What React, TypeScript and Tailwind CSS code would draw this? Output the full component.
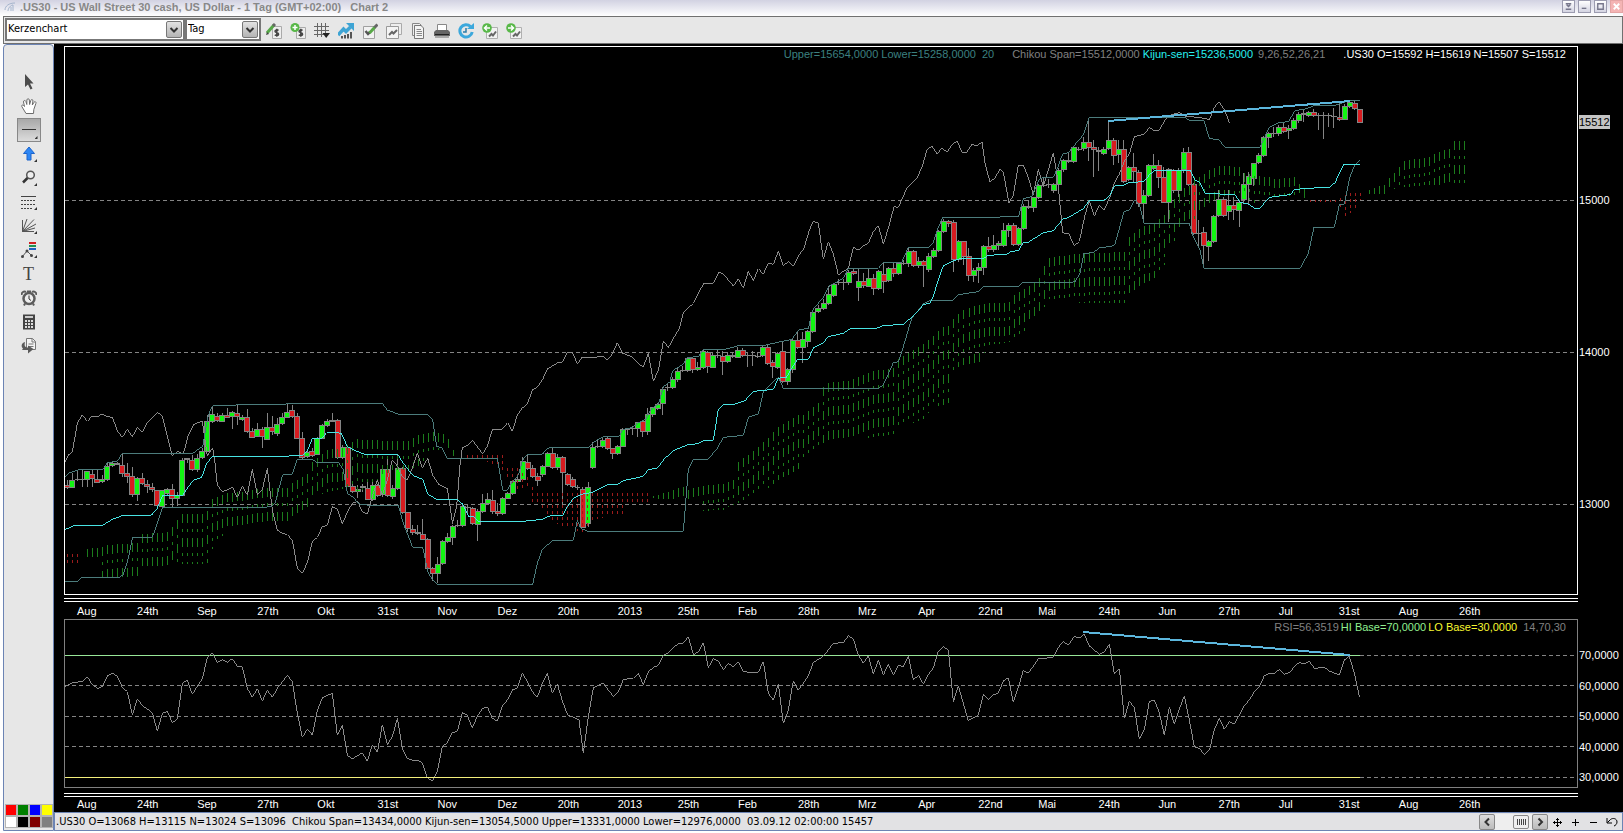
import type { ReactNode } from 'react'

const AXIS_LABELS = [
    'Aug', '24th', 'Sep', '27th', 'Okt', '31st', 'Nov', 'Dez', '20th', '2013', '25th', 'Feb',
    '28th', 'Mrz', 'Apr', '22nd', 'Mai', '24th', 'Jun', '27th', 'Jul', '31st', 'Aug', '26th',
]

const SWATCHES = ['bg-[#ff0000]', 'bg-[#008000]', 'bg-[#0000ff]', 'bg-[#ffff00]', 'bg-white', 'bg-black', 'bg-[#800000]', 'bg-[#808080]']

// Every section of the series is drawn from its own origin, three units per pixel
interface Section {
    x: number
    y: number
    upper: string
    lower: string
    kijun: string
    chikou: string
    candles: string
}

const SECTIONS: Section[] = [
    {
        x: 60,
        y: 380,
        upper: '14,292 27,279 60,268 130,268 142,248 172,244 187,220 398,220 415,208 428,200 440,130 445,105 458,77 525,76 532,73 675,73 682,70 967,70 982,90 1000,96 1012,102 1104,104 1118,120 1130,200 1145,202 1162,235 1200,235',
        lower: '14,603 52,604 67,592 178,592 190,584 205,535 217,474 277,472 292,430 308,382 632,381 645,370 668,285 697,283 712,238 757,238 770,247 835,247 850,270 862,340 880,352 895,370 905,374 935,376 1015,376 1030,430 1058,502 1088,502 1105,580 1120,602 1133,613 1200,613',
        kijun: '14,449 40,438 128,436 157,418 187,407 275,405 290,388 308,346 368,346 398,302 425,292 440,250 458,229 675,229 730,225 742,212 757,176 785,175 800,158 832,157 845,162 862,200 908,222 1013,223 1030,250 1058,286 1088,298 1103,342 1130,358 1190,358',
        chikou: '14,248 25,225 37,215 52,130 67,104 82,124 97,108 112,110 127,102 142,110 157,112 172,152 187,172 202,148 217,170 232,142 247,156 262,128 293,98 307,108 337,228 352,214 370,222 385,165 400,135 427,122 435,180 442,228 450,215 458,203 465,250 472,315 487,335 502,330 517,321 532,352 547,318 562,345 577,268 592,345 607,328 622,265 637,390 652,450 667,460 682,464 697,480 712,565 727,580 742,548 757,485 772,472 787,440 802,436 817,380 832,388 847,432 862,396 877,370 893,364 907,395 922,402 937,350 952,300 967,345 982,300 997,240 1012,258 1027,290 1042,300 1057,265 1072,220 1087,265 1103,235 1118,285 1135,312 1148,320 1162,325 1178,432',
        candles: 'r22,317,322,300,328 g37,301,322,278,325 d52,299,301,270,302 d67,298,300,268,322 g82,275,298,272,322 r97,284,297,270,322 r112,299,307,270,308 g127,299,306,285,308 g142,260,299,245,302 g157,250,258,246,262 r172,251,254,246,256 r187,256,280,222,290 r202,281,289,250,308 r217,290,343,262,350 g232,295,343,290,362 r247,295,312,280,315 r262,314,320,300,340 r277,322,330,308,335 r292,332,378,330,380 g307,332,380,330,382 g322,329,340,325,345 r337,329,357,312,385 g352,347,356,335,378 g367,241,347,235,348 g382,237,240,235,250 r397,241,268,225,272 g412,236,268,222,275 g427,215,234,205,236 g442,126,214,105,216 g457,103,125,78,128 r472,109,123,100,125 g487,107,124,98,126 r502,108,112,85,115 g517,99,109,92,148 r532,100,110,75,135 g547,113,119,105,122 r562,113,154,88,160 r577,154,172,145,175 g592,150,170,130,172 r607,150,171,142,205 g622,143,178,98,180 r637,144,155,108,165 g652,133,160,115,168 g667,113,132,100,135 g682,97,112,70,115 r697,92,110,75,115 r712,109,175,100,178 r727,176,232,155,236 g742,217,231,210,235 r757,216,228,205,232 g772,176,223,172,225 g787,136,175,132,178 g802,124,136,116,140 r817,121,124,100,126 r833,121,232,118,236 g848,203,232,195,236 r863,203,320,200,322 r879,320,336,310,338 g894,330,336,315,355 g908,319,324,312,335 r923,326,358,305,360 g938,318,358,300,362 r953,318,346,312,350 g968,268,345,262,352 r983,269,348,238,350 g998,325,351,315,356 g1013,265,325,225,330 r1028,266,397,262,402 r1043,398,447,395,456 r1058,449,459,436,465 r1073,457,462,436,466 r1088,464,478,418,480 r1103,478,566,475,572 r1118,566,580,560,602 g1133,554,582,530,610 g1148,485,550,480,555 g1163,474,484,460,490 g1178,440,472,435,495',
    },
    {
        x: 440,
        y: 380,
        upper: '60,235 172,235 188,331 202,330 215,308 235,285 248,240 262,223 308,222 322,206 332,202 447,202 462,186 490,170 537,169 550,148 575,143 600,126 618,118 625,100 640,82 655,72 668,30',
        lower: '60,613 278,613 292,550 307,508 338,482 400,481 412,420 422,445 445,454 730,454 745,268 760,238 805,238',
        kijun: '50,358 68,372 85,408 100,410 115,424 250,424 308,418 322,410 338,406 368,406 382,380 400,355 430,341 455,338 490,320 505,314 535,312 550,302 610,289 625,269 652,264 672,238',
        chikou: '37,430 50,380 60,255 67,204 82,196 98,182 128,222 142,198 157,150 187,148 203,128 217,154 232,105 247,84 262,72 277,30 292,22 307,0 322,-33 352,-51 367,-54 382,-84 397,-84 412,-48 427,-69 457,-66 487,-72 502,-60 517,-78 532,-112 547,-81 577,-69 600,-44',
        candles: 'd53,438,440,420,442 g68,380,438,370,442 d84,384,386,372,402 r98,386,432,382,434 g113,395,434,388,482 g128,370,395,342,398 g143,359,370,340,372 r158,363,395,330,402 r173,395,402,370,408 g188,355,402,350,404 g203,341,355,335,358 g218,306,341,302,345 g233,299,304,290,308 g248,246,298,230,302 r263,248,265,225,270 r278,265,290,255,295 r293,290,302,280,318 g308,260,283,255,290 g323,220,260,215,262 r338,221,263,205,266 g353,232,264,222,270 r368,232,278,228,375 r383,283,313,280,318 r398,299,320,292,325 d413,322,325,315,330 r428,328,442,322,445 g445,322,432,306,440 g459,203,262,185,268 d474,200,203,180,205 g488,181,199,175,205 r503,176,205,172,210 r518,206,222,205,238 g533,200,222,195,225 g548,148,199,145,200 d563,148,150,145,165 d578,146,150,138,165 g593,129,145,125,172 r608,126,154,122,170 g624,104,154,85,165 g638,83,103,80,110 g653,74,86,70,90',
    },
    {
        x: 640,
        y: 200,
        upper: '68,570 70,560 90,545 98,512 130,492 142,472 175,470 190,448 255,448 292,438 365,438 400,430 455,418 478,388 505,386 518,330 550,292 568,258 610,235 625,205 715,205 730,187 785,187 805,142 865,142 880,128 890,95 908,52 1080,52',
        lower: '205,777 232,745 250,712 310,706 325,652 355,642 370,575 400,545 415,532 430,565 715,565 730,555 760,488 775,485 790,440 815,355 850,312 870,302 940,300 955,284 1015,275 1030,259 1080,259',
        kijun: '72,778 100,752 145,734 175,731 190,722 220,720 235,628 250,613 283,613 315,602 340,574 400,568 415,535 440,531 452,510 473,478 505,478 520,444 550,428 565,410 610,400 632,385 715,384 730,376 790,374 825,342 852,313 870,310 880,288 895,240 910,197 940,182 965,175 1030,175 1045,166 1080,164',
        chikou: '0,496 10,500 25,460 40,543 55,512 70,422 85,443 100,415 118,385 130,338 160,310 190,252 220,250 237,217 250,222 280,258 295,236 310,264 325,214 340,243 355,206 370,222 385,190 400,193 415,154 430,198 445,184 460,198 475,168 492,145 508,90 520,64 535,70 550,178 565,125 580,162 595,225 610,214 625,205 640,142 655,150 670,138 685,130 700,95 715,77 730,132 748,75 762,20 775,22 785,0 801,-36 816,-51 831,-66 846,-99 861,-150 876,-162 891,-138 906,-156 921,-144 936,-165 951,-177 966,-144 981,-144 996,-168 1011,-162 1026,-174 1035,-110 1050,-54 1065,-66 1080,-93',
        candles: 'g69,568,612,560,645 d84,562,568,548,572 g99,539,562,530,568 g114,514,538,500,545 d129,512,514,498,516 g144,475,511,470,515 r159,476,508,472,520 g174,503,508,485,512 g190,455,502,448,508 r204,457,500,452,518 g219,467,502,455,505 d234,466,468,450,475 r249,469,485,452,525 g264,467,485,455,488 r279,466,469,455,475 g294,451,472,440,475 r309,451,468,445,472 d324,467,469,455,500 d339,467,469,452,498 d354,469,471,455,474 g369,443,467,438,470 r384,443,490,432,495 r399,489,500,480,533 g414,460,502,455,508 r429,455,544,422,548 g444,509,545,505,555 g459,422,508,415,520 r474,422,444,395,448 g489,419,443,395,490 g504,396,424,390,440 g519,338,395,330,398 g535,325,336,315,340 g551,310,326,298,330 g566,284,310,258,314 g582,254,286,250,290 d596,249,251,238,256 d611,247,249,236,270 g627,217,249,210,255 r641,216,221,208,225 g656,244,262,208,302 r671,244,258,220,265 g686,235,260,205,262 r701,236,265,222,285 g716,215,265,210,270 r731,224,244,188,278 g746,205,243,200,246 r761,205,222,188,230 g776,192,222,188,226 d791,190,192,180,194 g806,154,190,145,200 r821,154,198,150,202 g836,185,198,170,205 r851,185,198,180,262 g866,169,208,160,215 g881,151,170,145,175 g896,94,151,90,155 g911,64,94,58,98 r926,66,70,60,80 r941,67,178,60,215 g956,125,178,120,185 r971,126,170,122,195 r986,170,226,145,242 g1001,211,226,205,245 g1016,202,212,190,248 g1031,140,202,135,225 r1046,140,150,112,155 g1061,137,150,105,155 g1076,132,136,122,150',
    },
    {
        x: 1000,
        y: 80,
        upper: '0,411 55,411 70,356 95,350 118,298 130,292 160,292 172,265 188,222 205,218 235,182 250,165 268,112 555,112 568,121 612,122 628,175 658,180 674,202 780,202 808,142 835,128 865,125 885,92 920,86 945,76 1010,75 1035,66 1050,62 1080,62',
        lower: '0,619 55,619 70,607 225,606 240,580 252,520 280,518 300,502 335,500 345,492 372,395 388,390 403,360 418,372 432,430 568,430 580,470 600,510 612,565 900,565 925,520 942,442 1003,442 1018,375 1033,372 1050,290 1063,258 1080,241',
        kijun: '0,524 20,522 35,514 55,512 70,488 85,487 130,458 160,452 190,416 205,413 250,386 268,361 315,360 330,345 345,317 370,316 385,308 430,305 450,283 465,271 570,271 585,300 600,308 615,340 705,344 720,367 745,372 765,385 780,385 795,366 810,352 850,346 870,344 885,328 935,325 960,322 990,321 1005,308 1030,255 1080,253',
        chikou: '0,268 10,276 27,370 40,345 55,256 70,256 85,292 100,345 115,268 130,318 145,270 160,218 172,290 188,458 207,462 223,498 238,484 255,405 268,362 283,408 298,375 313,390 330,350 343,310 358,282 375,240 388,222 403,170 433,162 448,143 463,152 478,150 497,118 512,105 538,98 555,108 615,115 628,120 643,82 657,66 673,88 688,128',
        candles: 'g11,451,496,430,500 g27,437,451,430,470 r42,437,493,430,497 g56,446,493,440,498 g72,380,445,372,450 r87,379,384,360,388 g102,353,384,350,395 g117,318,352,312,358 d132,316,318,290,320 d147,315,317,298,325 g162,315,331,308,340 g177,271,315,265,320 g192,242,270,238,275 r207,241,246,220,250 g222,203,246,198,250 d237,208,210,200,214 g252,187,207,170,212 r267,187,202,120,242 r282,202,210,180,290 r297,211,216,200,272 g312,208,220,200,225 g327,181,206,122,210 r342,181,226,175,256 g357,210,225,180,250 r372,209,306,180,310 g387,263,298,258,302 r402,263,276,220,310 r417,277,370,270,380 g432,347,370,330,420 g447,257,346,252,350 g462,258,266,222,270 r477,257,292,240,325 r491,292,367,260,370 g507,270,367,265,425 r522,272,333,268,340 g537,273,331,265,350 g552,217,270,205,278 r567,217,313,202,318 r582,314,460,310,465 d597,460,462,420,500 r612,458,498,440,560 g627,486,499,480,542 g641,410,485,405,490 g656,359,408,330,412 r671,359,408,350,412 g686,377,394,330,420 r701,377,390,350,420 g718,369,391,360,442 g732,315,360,280,372 g747,290,313,275,372 g762,251,296,248,318 g777,227,249,220,252 g792,173,227,168,230 g807,162,172,155,205 d822,160,162,140,172 g837,143,162,135,168 r852,142,154,125,158 g867,147,153,135,178 g882,121,145,115,150 g897,104,122,95,130 r912,102,105,90,125 g927,97,106,92,112 r942,97,106,88,110 d957,106,108,98,150 d972,106,108,95,178 d987,108,110,100,142 d1002,110,112,85,145 r1019,113,119,70,122 g1034,79,118,72,120 g1049,67,80,60,85 r1064,71,87,60,90 r1080,88,127,88,127',
    },
]

const RSI_SECTIONS = [
    { x: 60, points: '14,230 40,217 67,215 82,200 97,224 114,236 128,228 142,198 157,190 172,198 187,232 202,245 217,315 232,266 247,287 277,308 292,364 307,310 322,304 337,338 352,328 367,220 382,210 397,253 412,228 427,206 442,142 457,128 472,157 487,149 502,157 517,146 532,169 547,171 562,235 577,262 592,236 607,273 622,241 637,262 652,235 682,196 697,215 712,310 727,382 742,358 757,375 772,302 787,263 817,250 832,376 847,345 862,436 877,447 907,428 922,454 937,404 952,427 967,344 982,404 997,380 1012,325 1027,415 1042,445 1057,451 1072,451 1087,458 1102,503 1117,513 1132,485 1147,410 1162,398 1177,368 1192,364 1207,308 1222,316 1237,354 1252,318 1267,297 1282,290 1297,325 1312,333 1327,288 1342,270 1357,240 1372,234 1387,190 1402,215 1417,245 1432,262 1447,220 1462,190' },
    { x: 540, points: '22,190 37,250 52,222 67,273 83,315 117,329 130,430 145,320 160,233 190,218 205,240 220,259 235,245 250,208 280,205 295,190 310,224 325,186 340,172 355,166 370,136 385,128 415,100 430,99 445,80 460,134 475,126 490,98 505,173 520,146 535,154 550,179 565,160 580,171 595,155 610,184 625,187 655,186 670,155 685,250 700,271 715,222 730,340 745,300 760,212 775,241 805,198 820,157 850,139 880,100 910,98 925,77 940,87 955,135 970,160 985,138 1000,192 1015,150 1030,195 1045,163 1060,195 1075,166 1090,170 1105,138 1120,210 1135,196 1150,222 1165,194 1180,174 1195,124 1210,110 1225,120 1240,275 1255,228 1270,280 1285,332 1315,315 1330,253 1345,268' },
    { x: 970, points: '55,268 70,255 85,249 100,213 115,203 130,277 145,232 160,181 175,190 205,147 250,142 265,112 280,95 295,105 313,79 328,84 343,73 358,108 388,133 403,125 418,103 433,192 448,176 463,325 478,274 493,293 508,388 523,358 538,275 553,270 568,308 583,376 598,290 613,343 628,298 643,257 658,330 673,410 688,415 703,433 718,421 733,360 748,325 763,358 778,335 793,343 808,315 823,287 838,270 853,245 868,230 883,197 898,190 913,190 928,179 943,193 960,186 975,168 988,157 1003,162 1018,154 1033,175 1063,172 1078,183 1108,195 1123,150 1138,139 1153,190 1168,260' },
]

// Kumo edges as [x, top, bottom]; hatch columns are interpolated every 5 px
type Edge = [number, number, number]
const CLOUDS: { rising: boolean; edges: Edge[] }[] = [
    { rising: false, edges: [[67, 554, 563], [77, 554, 563], [82, 554, 556]] },
    { rising: true, edges: [[87, 549, 557], [97, 548, 557], [102, 547, 577], [107, 545, 579], [137, 543, 577], [142, 534, 566], [162, 533, 566], [167, 532, 571], [172, 527, 563], [182, 514, 564], [202, 514, 564], [207, 511, 564], [212, 499, 549], [227, 493, 530], [232, 493, 526], [267, 488, 522], [287, 488, 522], [292, 483, 518], [307, 475, 510], [312, 462, 495], [327, 450, 493], [342, 448, 489], [352, 442, 488], [357, 439, 492], [367, 440, 488], [392, 441, 470], [407, 441, 470], [417, 435, 467], [432, 432, 452], [442, 434, 448], [447, 438, 448], [452, 450, 456], [457, 450, 456]] },
    { rising: false, edges: [[467, 455, 458], [482, 455, 459], [487, 455, 462], [502, 455, 470], [507, 468, 477], [517, 468, 490], [527, 477, 489], [532, 487, 502], [537, 493, 505], [543, 493, 512], [553, 493, 522], [563, 493, 526], [583, 493, 533], [593, 493, 520], [623, 493, 514], [628, 493, 504], [648, 493, 502]] },
    { rising: true, edges: [[653, 496, 498], [658, 495, 499], [673, 490, 499], [683, 487, 497], [688, 490, 499], [698, 487, 499], [703, 486, 511], [723, 484, 510], [733, 480, 505], [738, 462, 503], [753, 451, 493], [768, 438, 488], [778, 427, 480], [798, 415, 470], [803, 415, 457], [818, 404, 447], [823, 387, 443], [828, 383, 440], [848, 381, 437], [873, 371, 438], [893, 369, 436], [898, 359, 427], [923, 344, 420], [933, 336, 408], [943, 327, 405], [948, 327, 406], [953, 319, 370], [963, 310, 365], [978, 305, 363], [988, 303, 345], [1008, 303, 343], [1013, 295, 337], [1023, 289, 332], [1038, 280, 313], [1043, 267, 308], [1048, 258, 299], [1068, 255, 298], [1075, 254, 303], [1124, 252, 303], [1129, 236, 293], [1144, 226, 283], [1154, 223, 278], [1159, 219, 270], [1164, 215, 265], [1169, 210, 247], [1174, 199, 242], [1184, 188, 223], [1189, 186, 222], [1194, 177, 223], [1199, 177, 213], [1209, 170, 203], [1219, 166, 197], [1239, 167, 193], [1244, 173, 197], [1254, 176, 203], [1269, 177, 198], [1274, 179, 198], [1295, 177, 195], [1300, 186, 195], [1305, 190, 199]] },
    { rising: false, edges: [[1310, 200, 202], [1338, 200, 202], [1344, 195, 216], [1349, 193, 214], [1354, 193, 211], [1359, 193, 202], [1364, 193, 195]] },
    { rising: true, edges: [[1369, 190, 194], [1374, 188, 194], [1384, 185, 194], [1389, 178, 188], [1394, 173, 189], [1404, 161, 187], [1429, 157, 185], [1439, 152, 185], [1449, 149, 185], [1454, 141, 184], [1465, 141, 184]] },
]

function hatch(edges: Edge[]) {
    let d = ''
    const end = edges[edges.length - 1][0]
    for (let x = edges[0][0]; x <= end; x += 5.008) {
        const i = Math.max(1, edges.findIndex((e) => e[0] >= x))
        const [x0, t0, b0] = edges[i - 1]
        const [x1, t1, b1] = edges[i]
        const k = (x - x0) / (x1 - x0)
        d += `M${Math.round(x) + 0.5} ${Math.round(t0 + (t1 - t0) * k)}V${Math.round(b0 + (b1 - b0) * k)}`
    }
    return d
}

function Candles({ data }: { data: string }) {
    return (
        <>
            {data.split(' ').map((item) => {
                const [x, top, bottom, high, low] = item.slice(1).split(',').map(Number)
                return (
                    <g key={item} stroke="#848484" strokeWidth="3">
                        <path d={`M${x} ${high}V${low}`} />
                        {item[0] === 'd' ? (
                            <path d={`M${x - 8} ${top}H${x + 8}`} />
                        ) : (
                            <rect x={x - 7} y={top} width="15" height={bottom - top} fill={item[0] === 'g' ? '#12f512' : '#d81c20'} />
                        )}
                    </g>
                )
            })}
        </>
    )
}

function PriceChart() {
    return (
        <svg viewBox="65 47 1512 547" preserveAspectRatio="none" className="block h-full w-full" fill="none" shapeRendering="crispEdges">
            {[200, 352, 504].map((y) => (
                <path key={y} d={`M65 ${y}.5H1577`} stroke="#848484" strokeDasharray="4 3" />
            ))}
            {SECTIONS.map((s) => (
                <g key={s.x} transform={`translate(${s.x} ${s.y}) scale(0.33333)`}>
                    <Candles data={s.candles} />
                </g>
            ))}
            {CLOUDS.map((c) => (
                <path key={c.edges[0][0]} d={hatch(c.edges)} stroke={c.rising ? '#1c7c1c' : '#9c1c1c'} strokeDasharray={c.rising ? '9 6 3 6' : '3 3'} />
            ))}
            {SECTIONS.map((s) => (
                <g key={s.x} transform={`translate(${s.x} ${s.y}) scale(0.33333)`} strokeWidth="3">
                    <polyline points={s.chikou} stroke="#8a8a8a" />
                    <polyline points={s.upper} stroke="#4c7c7c" />
                    <polyline points={s.lower} stroke="#4c7c7c" />
                    <polyline points={s.kijun} stroke="#48e4e4" />
                </g>
            ))}
            <path d="M1108 121L1350 101" stroke="#5cb6dc" strokeWidth="2" />
        </svg>
    )
}

function RsiChart() {
    return (
        <svg viewBox="65 620 1512 167" preserveAspectRatio="none" className="block h-full w-full" fill="none" shapeRendering="crispEdges">
            {[655, 685, 716, 746, 777].map((y) => (
                <path key={y} d={`M65 ${y}.5H1577`} stroke="#848484" strokeDasharray="4 3" />
            ))}
            <path d="M65 655.5H1360" stroke="#98e698" />
            {RSI_SECTIONS.map((s) => (
                <g key={s.x} transform={`translate(${s.x} 610) scale(0.33333)`}>
                    <polyline points={s.points} stroke="#8a8a8a" strokeWidth="3" />
                </g>
            ))}
            <path d="M65 777.5H1360" stroke="#f4f07c" />
            <path d="M1083 632L1350 655" stroke="#5cb6dc" strokeWidth="2" />
        </svg>
    )
}

function TimeAxis({ className }: { className: string }) {
    return (
        <div className="mr-[45px] border-t border-white">
            <div className={`mt-[2px] grid grid-cols-[repeat(24,minmax(0,1fr))] border-t border-white pr-[59px] pl-[13px] text-white ${className}`}>
                {AXIS_LABELS.map((label, i) => (
                    <span key={i}>{label}</span>
                ))}
            </div>
        </div>
    )
}

function ChevronDown() {
    return (
        <span className="pointer-events-none absolute top-[2px] right-[2px] flex h-[17px] w-4 items-center justify-center rounded-xs border border-[#777] bg-linear-to-b from-[#e2e2e2] to-[#b4b4b4]">
            <svg viewBox="0 0 10 8" className="h-2 w-[10px]" fill="none" stroke="#333" strokeWidth="2">
                <path d="M1.5 2L5 5.5L8.500 2" />
            </svg>
        </span>
    )
}

function Icon({ children }: { children: ReactNode }) {
    return (
        <svg viewBox="0 0 16 16" className="h-4 w-4" fill="none">
            {children}
        </svg>
    )
}

const DOLLAR = 'M12.500 7.500C11.500 6.500 9 6.700 9 8.200C9 9.800 12.600 9.300 12.600 11.200C12.600 12.800 9.800 12.800 8.800 11.800M10.800 5.800V13.800'
const CHART_BOX = (
    <>
        <path d="M4.500 4.500H15.500V15.500H4.500Z" fill="#f2f2f2" stroke="#b0b0b0" />
        <path d="M7 13.500L9.500 11L11 12.500L14 8.500" stroke="#666" strokeWidth="2" />
    </>
)

const TOOLBAR: { label: string; icon: ReactNode }[] = [
    {
        label: 'Edit instrument',
        icon: (
            <>
                <path d="M6.500 3.500H15.500V15.500H6.500Z" fill="#eee" stroke="#aaa" />
                <path d={DOLLAR} stroke="#444" strokeWidth="1.500" />
                <path d="M1 10L8 2" stroke="#56a848" strokeWidth="3" />
                <path d="M7 3L9 1" stroke="#666" strokeWidth="3" />
                <path d="M0 12L1 9L3 11Z" fill="#444" />
            </>
        ),
    },
    {
        label: 'Add instrument',
        icon: (
            <>
                <path d="M6.500 4.500H15.500V15.500H6.500Z" fill="#eee" stroke="#aaa" />
                <path d={DOLLAR} stroke="#444" strokeWidth="1.500" />
                <circle cx="5" cy="4.500" r="4.500" fill="#58b848" />
                <path d="M5 2V7M2.500 4.500H7.500" stroke="#fff" strokeWidth="1.500" />
            </>
        ),
    },
    {
        label: 'Grid',
        icon: (
            <>
                <path d="M3.500 0V14M7.500 0V14M11.500 0V10M0 3.500H15M0 7.500H15M0 11.500H10" stroke="#666" />
                <path d="M8.500 10H16L12.200 15Z" fill="#222" />
            </>
        ),
    },
    {
        label: 'Indicators',
        icon: (
            <>
                <path d="M4 15.500V13M7 15.500V12M10 15.500V11M13 15.500V9" stroke="#555" strokeWidth="2" />
                <path d="M0 12L5.500 6L8 8.500L12.500 4" stroke="#3ea4d4" strokeWidth="3.500" />
                <path d="M8 0H16V8Z" fill="#3ea4d4" />
            </>
        ),
    },
    {
        label: 'Confirm',
        icon: (
            <>
                <path d="M1.500 3.500H12.500V15.500H1.500Z" fill="#f2f2f2" stroke="#a0a0a0" />
                <path d="M3.500 8L6 11L8 9" stroke="#555" strokeWidth="2.500" />
                <path d="M7.500 10L13 4" stroke="#58a848" strokeWidth="3" />
                <path d="M12.500 4.500L15.500 1.500" stroke="#666" strokeWidth="3" />
            </>
        ),
    },
    {
        label: 'Windows',
        icon: (
            <>
                <path d="M4.500 0.500H15.500V11.500H4.500Z" fill="#eee" stroke="#aaa" />
                <path d="M0.500 3.500H12.500V15.500H0.500Z" fill="#f4f4f4" stroke="#999" />
                <path d="M3 12L6 9L7.500 10.500L11 7" stroke="#666" strokeWidth="2" />
            </>
        ),
    },
    {
        label: 'Copy',
        icon: (
            <>
                <path d="M2.500 0.500H9.500L11.500 2.500V12.500H2.500Z" fill="#eee" stroke="#888" />
                <path d="M4.500 2.500H11L13.500 5V15.500H4.500Z" fill="#f4f4f4" stroke="#777" />
                <path d="M6.500 6.500H11M6.500 8.500H12M6.500 10.500H12M6.500 12.500H12" stroke="#888" />
            </>
        ),
    },
    {
        label: 'Print',
        icon: (
            <>
                <path d="M3.500 1.500H12.500V8H3.500Z" fill="#fff" stroke="#888" />
                <path d="M2 7H14L16 9V13H0V9Z" fill="#666" />
                <path d="M1 11.500H15" stroke="#222" />
                <path d="M1 14H15" stroke="#aaa" strokeWidth="2" />
            </>
        ),
    },
    {
        label: 'Refresh',
        icon: (
            <>
                <path d="M12.500 3.500A6.200 6.200 0 1 0 14.200 9" stroke="#3ca8dc" strokeWidth="3" />
                <path d="M9 6H16V0Z" fill="#3ca8dc" />
                <path d="M8 5V9H5" stroke="#2c7ca8" strokeWidth="1.500" />
            </>
        ),
    },
    {
        label: 'Previous chart',
        icon: (
            <>
                {CHART_BOX}
                <circle cx="5" cy="5" r="4.800" fill="#58b848" />
                <path d="M8 5H3M5 2.500L2.500 5L5 7.500" stroke="#fff" strokeWidth="1.500" />
            </>
        ),
    },
    {
        label: 'Next chart',
        icon: (
            <>
                {CHART_BOX}
                <circle cx="5" cy="5" r="4.800" fill="#58b848" />
                <path d="M2 5H7M5 2.500L7.500 5L5 7.500" stroke="#fff" strokeWidth="1.500" />
            </>
        ),
    },
]

const CORNER = <path d="M16 13V16H13Z" fill="#333" />

const TOOLS: { label: string; active?: boolean; icon: ReactNode }[] = [
    { label: 'Pointer', icon: <path d="M4 0V13L7 10.500L9.500 15.500L11.500 14.500L9 9.500H12.500Z" fill="#4c4c4c" /> },
    {
        label: 'Pan',
        icon: <path d="M5 15.500L0.800 8.500C0.300 6.800 2 6.300 3.500 8.500L2.500 4C2.300 2.300 4.300 1.900 4.900 3.500L5.800 6.500L5.900 2C6 0.300 8.200 0.300 8.300 2L8.600 6.500L9.900 2.300C10.400 0.900 12.200 1.400 11.900 3L11.300 7L13 4.300C13.800 3 15.500 3.900 14.900 5.400L12.800 11.500L12.500 15.500Z" fill="#fff" stroke="#6c6c6c" />,
    },
    { label: 'Line', active: true, icon: <path d="M1 7.500H15" stroke="#333" /> },
    {
        label: 'Arrow',
        icon: (
            <>
                <path d="M8 1L13.500 7.500H10V14H6V7.500H2.500Z" fill="#2c86f4" stroke="#1c64cc" />
                {CORNER}
            </>
        ),
    },
    {
        label: 'Magnifier',
        icon: (
            <>
                <circle cx="9.500" cy="5" r="3.800" fill="#eee" stroke="#555" strokeWidth="1.500" />
                <path d="M6.500 8L2 12.500" stroke="#333" strokeWidth="2.500" />
                {CORNER}
            </>
        ),
    },
    {
        label: 'Retracement',
        icon: (
            <>
                <path d="M0 2.500H15" stroke="#444" />
                <path d="M0 6.500H15M0 10.500H15M0 14.500H12" stroke="#444" strokeDasharray="2 1" />
                {CORNER}
            </>
        ),
    },
    {
        label: 'Fan',
        icon: (
            <>
                <path d="M1.500 2V13.500H13M1.500 13.500L6 1M1.500 13.500L13 1.500M1.500 13.500L15 6M1.500 13.500L14 10" stroke="#555" />
                {CORNER}
            </>
        ),
    },
    {
        label: 'Trend channel',
        icon: (
            <>
                <path d="M8 1H15" stroke="#d02020" strokeWidth="2" />
                <path d="M8 4H15" stroke="#209050" strokeWidth="2" />
                <path d="M8 7H15" stroke="#2060c0" strokeWidth="2" />
                <path d="M1 15L6 9L11 14" stroke="#555" />
                <circle cx="1.500" cy="14.500" r="1.500" fill="#444" />
                <circle cx="6" cy="9" r="1.500" fill="#444" />
                <circle cx="10.500" cy="13.500" r="1.500" fill="#444" />
                {CORNER}
            </>
        ),
    },
    { label: 'Text', icon: null },
    {
        label: 'Alarm',
        icon: (
            <>
                <circle cx="8" cy="8.500" r="5.500" fill="#eee" stroke="#5c5c5c" strokeWidth="2.500" />
                <path d="M0.500 5C0.500 2 3 1 5 2M15.500 5C15.500 2 13 1 11 2M6 1.500H10M4 13.500L3 15.500M12 13.500L13 15.500" stroke="#5c5c5c" strokeWidth="2" />
                <path d="M8 5.500V9L10 10.500" stroke="#333" />
            </>
        ),
    },
    {
        label: 'Calculator',
        icon: (
            <>
                <path d="M2 0.500H14V15.500H2Z" fill="#444" />
                <path d="M4 3H12" stroke="#ccc" strokeWidth="2" />
                <path d="M4 7H12M4 10H12M4 13H12" stroke="#ddd" strokeWidth="2" strokeDasharray="2 1" />
            </>
        ),
    },
    {
        label: 'Export',
        icon: (
            <>
                <path d="M5.500 0.500H11.500L14.500 3.500V11.500H5.500Z" fill="#f4f4f4" stroke="#777" />
                <path d="M11 0.500V4H14.500M7.500 6H12.500M7.500 8.500H12.500" stroke="#777" />
                <path d="M4 4C0 5 0 9 2 10.500L1 12H7V15.500L12.500 11L7 7.500V9.500C4 9.500 3 8 4 4Z" fill="#5a5a5a" />
            </>
        ),
    },
]

const WINDOW_BUTTONS = [
    { label: 'Roll up', path: 'M3 3H9M3 9H9M4 4L6 6L8 4' },
    { label: 'Minimize', path: 'M3 8H8' },
    { label: 'Maximize', path: 'M3 3H9V9H3Z' },
]

export default function App() {
    return (
        <div className="flex h-screen w-full flex-col overflow-hidden bg-white font-['Liberation_Sans',Arial,sans-serif] text-[11px]">
            {/* Title bar */}
            <header className="flex h-4 shrink-0 items-start bg-linear-to-b from-[#d2d2e2] to-white pl-1 font-bold text-[#888]">
                <svg viewBox="0 0 12 10" className="mt-[2px] mr-1 h-[10px] w-3" fill="none" stroke="#a4b4cc">
                    <path d="M1 8C1 4 5 1 11 1M4 9C4 6 7 3 9 3V9M7 9V5" />
                </svg>
                <h1 className="flex gap-[9px] leading-[14px]">
                    <span>.US30 - US Wall Street 30 cash, US Dollar - 1 Tag (GMT+02:00)</span>
                    <span>Chart 2</span>
                </h1>
                <div className="ml-auto flex h-full items-start gap-[3px]">
                    {WINDOW_BUTTONS.map((b) => (
                        <button key={b.label} type="button" aria-label={b.label} className="h-[13px] w-[13px] border border-[#9c9cb0] bg-linear-to-b from-white to-[#d4d4e2]">
                            <svg viewBox="0 0 12 12" className="block h-[11px] w-[11px]" fill="none" stroke="#77778c" strokeWidth="1.500">
                                <path d={b.path} />
                            </svg>
                        </button>
                    ))}
                    <button type="button" aria-label="Close" className="h-[13px] w-[13px] border border-[#e4a4a4] bg-[#f4b4b4]">
                        <svg viewBox="0 0 12 12" className="block h-[11px] w-[11px]" stroke="#fff" strokeWidth="2">
                            <path d="M3 3L9 9M9 3L3 9" />
                        </svg>
                    </button>
                </div>
            </header>

            {/* Toolbar */}
            <div className="ml-[3px] flex h-7 shrink-0 border border-[#707070] bg-[#e7e7e7] pt-px pl-px font-['DejaVu_Sans_Condensed','DejaVu_Sans',sans-serif]">
                <div className="relative h-[23px] w-[180px]">
                    <select aria-label="Chart type" className="h-full w-full appearance-none rounded-none border-2 border-[#777] bg-white px-px text-black">
                        <option>Kerzenchart</option>
                    </select>
                    <div className="absolute top-px right-px"><ChevronDown /></div>
                </div>
                <div className="relative h-[23px] w-[76px]">
                    <select aria-label="Interval" className="h-full w-full appearance-none rounded-none border-2 border-[#777] bg-white px-px text-black">
                        <option>Tag</option>
                    </select>
                    <div className="absolute top-px right-px"><ChevronDown /></div>
                </div>
                <div className="flex items-center gap-2 pl-[5px]">
                    {TOOLBAR.map((t) => (
                        <button key={t.label} type="button" aria-label={t.label}>
                            <Icon>{t.icon}</Icon>
                        </button>
                    ))}
                </div>
            </div>

            <div className="flex min-h-0 flex-1 pb-[2px] pl-[3px]">
                {/* Drawing tools */}
                <aside className="flex w-[51px] shrink-0 flex-col items-center rounded-t-sm border border-[#6c84b4] bg-[#e7e7e7] pt-[25px]">
                    {TOOLS.map((t) => (
                        <button
                            key={t.label}
                            type="button"
                            aria-label={t.label}
                            className={t.active ? 'relative flex h-6 w-6 items-center justify-center border border-[#888] bg-linear-to-b from-[#a8a8a8] to-[#dcdcdc]' : 'flex h-6 w-6 items-center justify-center'}
                        >
                            {t.icon ? <Icon>{t.icon}</Icon> : <span className="font-['Liberation_Serif',serif] text-lg leading-6 text-[#444]">T</span>}
                            {t.active && <span className="absolute right-[2px] bottom-[2px] h-[3px] w-[3px] bg-[#333] [clip-path:polygon(100%_0,100%_100%,0_100%)]" />}
                        </button>
                    ))}
                    <div className="mt-auto mb-[2px] grid grid-cols-4">
                        {SWATCHES.map((color) => (
                            <button key={color} type="button" aria-label="Colour" className={`h-3 w-3 border border-[#b4b4b4] ${color}`} />
                        ))}
                    </div>
                </aside>

                <main className="flex min-w-0 flex-1 flex-col bg-black">
                    <div className="flex min-h-0 flex-1 flex-col pt-[2px] pl-[10px]">
                        {/* Price pane */}
                        <section className="flex min-h-0 flex-[549]">
                            <div className="relative min-w-0 flex-1 border border-white">
                                <PriceChart />
                                <div className="absolute top-0 right-[11px] flex leading-[14px] text-[#808080]">
                                    <span className="mr-[6px] text-[#3c8080]">Upper=15654,0000 Lower=15258,0000</span>
                                    <span className="mr-[18px] text-[#3c8080]">20</span>
                                    <span className="mr-[3px]">Chikou Span=15512,0000</span>
                                    <span className="mr-[5px] text-[#28f0f0]">Kijun-sen=15236,5000</span>
                                    <span className="mr-[18px]">9,26,52,26,21</span>
                                    <span className="text-white">.US30 O=15592 H=15619 N=15507 S=15512</span>
                                </div>
                            </div>
                            <div className="grid w-[45px] grid-rows-[69fr_14px_64fr_14px_138fr_14px_138fr_14px_84fr] justify-start pl-px leading-[14px] text-white">
                                <span className="row-start-2 bg-[#c4c4c4] text-black">15512</span>
                                <span className="row-start-4">15000</span>
                                <span className="row-start-6">14000</span>
                                <span className="row-start-8">13000</span>
                            </div>
                        </section>
                        <div className="mt-[3px]"><TimeAxis className="h-[18px] leading-[18px]" /></div>

                        {/* RSI pane */}
                        <section className="flex min-h-0 flex-[169]">
                            <div className="relative min-w-0 flex-1 border border-[#808080]">
                                <RsiChart />
                                <div className="absolute top-0 right-[11px] flex gap-[2px] leading-[14px] text-[#808080]">
                                    <span>RSI=56,3519</span>
                                    <span className="text-[#90f090]">HI Base=70,0000</span>
                                    <span className="text-[#f8f830]">LO Base=30,0000</span>
                                    <span className="ml-1">14,70,30</span>
                                </div>
                            </div>
                            <div className="flex w-[45px] flex-col justify-between pt-[29px] pb-1 pl-px leading-[14px] text-white">
                                {['70,0000', '60,0000', '50,0000', '40,0000', '30,0000'].map((v) => (
                                    <span key={v}>{v}</span>
                                ))}
                            </div>
                        </section>
                        <div className="mt-[5px]"><TimeAxis className="h-4 leading-[14px]" /></div>
                    </div>

                    {/* Status bar */}
                    <footer className="flex h-[19px] shrink-0 items-center border border-[#6c84b4] bg-[#e2e2e4] pt-px pl-px font-['DejaVu_Sans_Condensed','DejaVu_Sans',sans-serif] whitespace-pre text-black">
                        <p>.US30 O=13068 H=13115 N=13024 S=13096  Chikou Span=13434,0000 Kijun-sen=13054,5000 Upper=13331,0000 Lower=12976,0000  03.09.12 02:00:00 15457</p>
                        <div className="ml-auto flex items-center">
                            <button type="button" aria-label="Scroll left" className="h-4 w-4 rounded-xs border border-[#888] bg-linear-to-b from-[#ddd] to-[#bbb]">
                                <svg viewBox="0 0 14 14" fill="none" stroke="#333" strokeWidth="2"><path d="M9 3.500L5.500 7L9 10.500" /></svg>
                            </button>
                            <div className="flex h-4 w-[37px] items-center justify-end bg-[#eee] pr-[3px]">
                                <div className="flex h-[14px] w-4 items-center justify-center gap-px rounded-xs border border-[#888] bg-[#eee]">
                                    {[0, 1, 2, 3, 4].map((i) => (
                                        <span key={i} className="h-[6px] w-px bg-[#444]" />
                                    ))}
                                </div>
                            </div>
                            <button type="button" aria-label="Scroll right" className="h-4 w-4 rounded-xs border border-[#888] bg-linear-to-b from-[#ddd] to-[#bbb]">
                                <svg viewBox="0 0 14 14" fill="none" stroke="#333" strokeWidth="2"><path d="M5.500 3.500L9 7L5.500 10.500" /></svg>
                            </button>
                            <div className="flex items-center gap-[7px] px-1">
                                <button type="button" aria-label="Move">
                                    <svg viewBox="0 0 11 11" className="h-[11px] w-[11px]" fill="none" stroke="#000" shapeRendering="crispEdges"><path d="M5.500 1V10M1 5.500H10M4 2.500H7M4 8.500H7M2.500 4V7M8.500 4V7" /></svg>
                                </button>
                                <button type="button" aria-label="Zoom in">
                                    <svg viewBox="0 0 11 11" className="h-[11px] w-[11px]" stroke="#000" shapeRendering="crispEdges"><path d="M5.500 2V9M2 5.500H9" /></svg>
                                </button>
                                <button type="button" aria-label="Zoom out">
                                    <svg viewBox="0 0 11 11" className="h-[11px] w-[11px]" stroke="#000" shapeRendering="crispEdges"><path d="M2 5.500H9" /></svg>
                                </button>
                                <button type="button" aria-label="Undo">
                                    <svg viewBox="0 0 12 11" className="h-[11px] w-3" fill="none" stroke="#000"><path d="M1 1V6H6M1.500 5.500L4.500 2.500C7 0.500 11 1.500 11 5C11 7 9.500 8.500 8 9" /></svg>
                                </button>
                            </div>
                        </div>
                    </footer>
                </main>
            </div>
        </div>
    )
}
